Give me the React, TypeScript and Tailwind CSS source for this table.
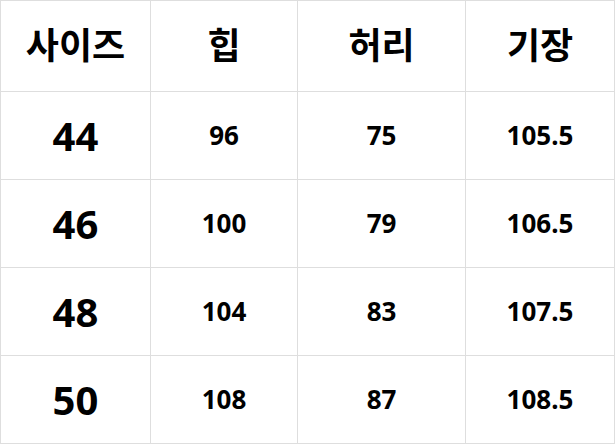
import React from "react";

const headers = ["사이즈", "힙", "허리", "기장"];

const rows = [
  ["44", "96", "75", "105.5"],
  ["46", "100", "79", "106.5"],
  ["48", "104", "83", "107.5"],
  ["50", "108", "87", "108.5"],
];

const fontStack = { fontFamily: '"Noto Sans", "Noto Sans CJK KR", sans-serif' };

export default function App() {
  return (
    <div
      className="grid w-[615px] grid-cols-[149px_146px_167px_148px] grid-rows-[90px_87px_87px_87px_87px] gap-px bg-[#dedede] p-px text-black"
      style={fontStack}
    >
      {headers.map((h) => (
        <div key={h} className="flex items-center justify-center bg-white text-[36px] font-bold">
          {h}
        </div>
      ))}
      {rows.map((row) =>
        row.map((cell, i) => (
          <div
            key={row[0] + "-" + i}
            className={
              i === 0
                ? "flex items-center justify-center bg-white text-[40px] font-bold"
                : "flex items-center justify-center bg-white text-[26px] font-bold"
            }
          >
            {cell}
          </div>
        ))
      )}
    </div>
  );
}
